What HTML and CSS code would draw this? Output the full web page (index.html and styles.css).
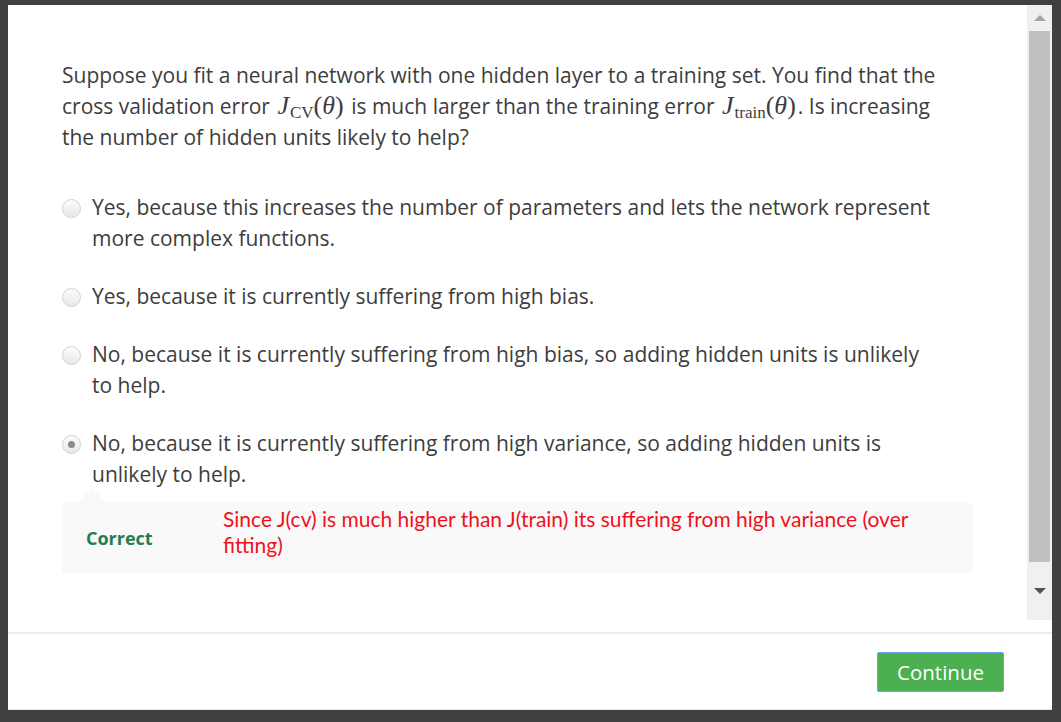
FILE: index.html
```html
<!DOCTYPE html>
<html>
<head>
<meta charset="utf-8">
<link rel="stylesheet" href="styles.css">
</head>
<body>
<div class="modal">
  <div class="scroll-area">
    <div class="content">
      <p class="question">Suppose you fit a neural network with one hidden layer to a training set. You find that the cross validation error <span class="math"><i>J</i><sub>CV</sub>(<i>θ</i>)</span> is much larger than the training error <span class="math"><i>J</i><sub>train</sub>(<i>θ</i>)</span>. Is increasing the number of hidden units likely to help?</p>
      <div class="options">
        <div class="option"><span class="radio"></span><span class="opt-text">Yes, because this increases the number of parameters and lets the network represent more complex functions.</span></div>
        <div class="option"><span class="radio"></span><span class="opt-text">Yes, because it is currently suffering from high bias.</span></div>
        <div class="option"><span class="radio"></span><span class="opt-text">No, because it is currently suffering from high bias, so adding hidden units is unlikely to help.</span></div>
        <div class="option"><span class="radio checked"></span><span class="opt-text">No, because it is currently suffering from high variance, so adding hidden units is unlikely to help.</span></div>
      </div>
      <div class="feedback">
        <span class="verdict">Correct</span>
        <span class="explain">Since J(cv) is much higher than J(train) its suffering from high variance (over fitting)</span>
      </div>
    </div>
    <div class="scrollbar">
      <div class="sb-btn"><span class="arrow-up"></span></div>
      <div class="sb-thumb"></div>
      <div class="sb-btn down"><span class="arrow-down"></span></div>
    </div>
  </div>
  <div class="footer">
    <button class="continue">Continue</button>
  </div>
</div>
</body>
</html>
```

FILE: styles.css
```css
html, body {
  margin: 0;
  padding: 0;
}
body {
  background: #404040;
  width: 1061px;
  height: 722px;
  overflow: hidden;
  font-family: "Open Sans", "Noto Sans", sans-serif;
}
.modal {
  margin: 5px 0 0 8px;
  width: 1044px;
  height: 705px;
  background: #fff;
  display: flex;
  flex-direction: column;
  border-bottom: 1px solid #e6e6e6;
  box-sizing: border-box;
}
.scroll-area {
  display: flex;
  height: 615px;
  flex: none;
}
.content {
  flex: 1;
  padding: 55px 54px 0 54px;
  color: #3d3d3d;
  font-size: 21px;
  line-height: 31px;
}
.question {
  margin: 0 0 39px 0;
  max-width: 890px;
}
.math {
  font-family: "Liberation Serif", "DejaVu Serif", serif;
  font-size: 26px;
  line-height: 20px;
  white-space: nowrap;
  margin: 0 2px;
}
.math i {
  font-style: italic;
}
.math sub {
  font-size: 17px;
  vertical-align: -4px;
  line-height: 0;
  margin-left: 1px;
}
.options {
  display: flex;
  flex-direction: column;
  gap: 27px;
}
.option {
  display: flex;
  align-items: flex-start;
  gap: 11px;
}
.radio {
  flex: none;
  width: 17px;
  height: 17px;
  margin-top: 7px;
  border-radius: 50%;
  border: 1px solid #d2d2d2;
  background: linear-gradient(#fcfcfc, #e8e8e8);
  box-sizing: content-box;
  display: flex;
  align-items: center;
  justify-content: center;
}
.radio.checked::after {
  content: "";
  width: 7px;
  height: 7px;
  border-radius: 50%;
  background: #8a8a8a;
}
.opt-text {
  flex: 1;
  padding-right: 36px;
}
.feedback {
  position: relative;
  margin-top: 13px;
  width: 911px;
  height: 70px;
  background: #f9f9f9;
  display: flex;
  align-items: center;
  box-sizing: border-box;
  padding-left: 24px;
}
.feedback::before {
  content: "";
  position: absolute;
  top: -15px;
  left: 15px;
  border-left: 15px solid transparent;
  border-right: 15px solid transparent;
  border-bottom: 15px solid #f9f9f9;
}
.verdict {
  width: 137px;
  flex: none;
  color: #1f7f4f;
  font-weight: 700;
  font-size: 18px;
}
.explain {
  flex: 1;
  color: #f01020;
  font-family: "Lato", "Open Sans", sans-serif;
  font-size: 21px;
  line-height: 26px;
  padding-right: 50px;
  margin-bottom: 13px;
}
.scrollbar {
  width: 25px;
  flex: none;
  background: #f0f0f0;
  display: flex;
  flex-direction: column;
}
.sb-btn {
  height: 26px;
  display: flex;
  align-items: center;
  justify-content: center;
}
.sb-btn.down {
  height: 58px;
}
.arrow-up {
  border-left: 6px solid transparent;
  border-right: 6px solid transparent;
  border-bottom: 6px solid #a3a3a3;
}
.arrow-down {
  border-left: 6px solid transparent;
  border-right: 6px solid transparent;
  border-top: 6px solid #505050;
}
.sb-thumb {
  flex: 1;
  margin: 0 2px;
  background: #c0c0c0;
}
.footer {
  margin-top: 12px;
  border-top: 2px solid #ececec;
  flex: 1;
  display: flex;
  align-items: center;
  justify-content: flex-end;
  padding-right: 48px;
}
.continue {
  width: 127px;
  height: 40px;
  background: #4caf50;
  border: 1px solid #6b9ff2;
  border-radius: 2px;
  color: #fff;
  font-family: "Open Sans", "Noto Sans", sans-serif;
  font-size: 20.5px;
  padding: 0;
}
```
